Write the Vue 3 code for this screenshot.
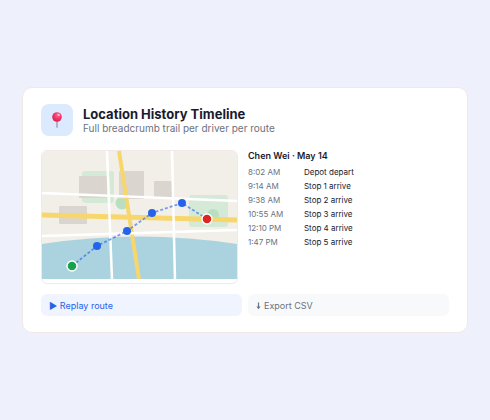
<script setup>
const events = [
  { time: '8:02 AM', label: 'Depot depart' },
  { time: '9:14 AM', label: 'Stop 1 arrive' },
  { time: '9:38 AM', label: 'Stop 2 arrive' },
  { time: '10:55 AM', label: 'Stop 3 arrive' },
  { time: '12:10 PM', label: 'Stop 4 arrive' },
  { time: '1:47 PM', label: 'Stop 5 arrive' },
]

const route = [
  { x: 30, y: 115 },
  { x: 55, y: 95 },
  { x: 85, y: 80 },
  { x: 110, y: 62 },
  { x: 140, y: 52 },
  { x: 165, y: 68 },
]
const routePoints = route.map((p) => `${p.x},${p.y}`).join(' ')
const stops = route.slice(1, -1)
const start = route[0]
const end = route[route.length - 1]
</script>

<template>
  <main class="page">
    <section class="card">
      <header class="head">
        <span class="badge">
          <svg class="pin" viewBox="0 0 12 18" aria-hidden="true">
            <defs>
              <radialGradient id="pin-ball" cx="0.6" cy="0.3" r="0.7">
                <stop offset="0" stop-color="#ff6f91" />
                <stop offset="0.45" stop-color="#f83a6b" />
                <stop offset="1" stop-color="#d81f55" />
              </radialGradient>
            </defs>
            <path d="M5.2 8 H6.8 V16 L6 17.4 L5.2 16 Z" fill="#a8a2b8" />
            <circle cx="6" cy="6" r="4.8" fill="url(#pin-ball)" />
            <ellipse cx="7.6" cy="3.8" rx="1.3" ry="0.9" fill="#ffc2d0" transform="rotate(35 7.6 3.8)" />
          </svg>
        </span>
        <div>
          <h1 class="title">Location History Timeline</h1>
          <p class="subtitle">Full breadcrumb trail per driver per route</p>
        </div>
      </header>

      <div class="body">
        <div class="map">
          <svg viewBox="0 0 195 128" role="img" aria-label="Route map">
            <rect width="195" height="128" fill="#f2efe9" />
            <g fill="#d4ead7">
              <rect x="40" y="20" width="32" height="32" rx="3" />
              <rect x="147" y="44" width="39" height="32" rx="3" />
            </g>
            <g fill="#b8dfc0">
              <circle cx="80" cy="52" r="6.5" />
              <circle cx="171" cy="64" r="6" />
            </g>
            <path d="M0 93 Q97.5 78 195 93 V128 H0 Z" fill="#aad3df" />
            <g fill="#dad5cf">
              <rect x="37" y="25" width="28" height="22" rx="1" />
              <rect x="77" y="20" width="25" height="28" rx="1" />
              <rect x="17" y="55" width="28" height="18" rx="1" />
              <rect x="112" y="30" width="19" height="17" rx="1" />
            </g>
            <g fill="none" stroke="#f7d76b">
              <path d="M0 64 L195 69" stroke-width="5" />
              <path d="M77 0 L97 128" stroke-width="4" />
            </g>
            <g fill="none" stroke="#fff" stroke-width="2.5">
              <path d="M0 42 L195 50" />
              <path d="M0 85 L195 79" />
              <path d="M65 0 L70 128" />
              <path d="M130 0 L133 128" />
            </g>
            <polyline :points="routePoints" class="trail" />
            <circle v-for="s in stops" :key="s.x" :cx="s.x" :cy="s.y" r="4" fill="#2563eb" />
            <g stroke="#fff" stroke-width="1.5">
              <circle :cx="start.x" :cy="start.y" r="5" fill="#16a34a" />
              <circle :cx="end.x" :cy="end.y" r="5" fill="#dc2626" />
            </g>
          </svg>
        </div>

        <div>
          <h2 class="driver">Chen Wei · May 14</h2>
          <table class="log">
            <tbody>
              <tr v-for="e in events" :key="e.time">
                <th scope="row">{{ e.time }}</th>
                <td>{{ e.label }}</td>
              </tr>
            </tbody>
          </table>
        </div>
      </div>

      <div class="actions">
        <button type="button" class="btn primary">▶ Replay route</button>
        <button type="button" class="btn">
          <svg class="down" viewBox="0 0 5 8" aria-hidden="true">
            <path d="M1.9 0.6 H3.1 V4.6 H4.6 L2.5 7.2 L0.4 4.6 H1.9 Z" fill="currentColor" />
          </svg>
          Export CSV
        </button>
      </div>
    </section>
  </main>
</template>

<style>
body {
  background: #eef0fc;
}
</style>

<style scoped>
.page {
  box-sizing: border-box;
  min-height: 100vh;
  padding: 0 22px;
  display: flex;
  align-items: center;
  font-family: Inter, "Liberation Sans", sans-serif;
  color: #1a1a2e;
}

.card {
  box-sizing: border-box;
  flex: 1;
  min-width: 0;
  padding: 16px 18px;
  background: #fff;
  border: 1px solid #f3e8e8;
  border-radius: 10px;
}

.head {
  display: flex;
  align-items: center;
  gap: 10px;
  margin-bottom: 14px;
}

.badge {
  display: flex;
  align-items: center;
  justify-content: center;
  width: 32px;
  height: 32px;
  border-radius: 8px;
  background: #dbeafe;
}

.pin {
  width: 12px;
  height: 18px;
}

.title {
  margin: 0;
  font-size: 13px;
  line-height: 16px;
  font-weight: 700;
}

.subtitle {
  margin: 0;
  font-size: 10px;
  line-height: 12px;
  color: #6b7280;
}

.body {
  display: grid;
  grid-template-columns: 49fr 50fr;
  gap: 10px;
}

.map {
  padding-bottom: 4px;
  border: 1px solid #f3e8e8;
  border-radius: 6px;
  overflow: hidden;
}

.map svg {
  display: block;
  width: 100%;
}

.trail {
  fill: none;
  stroke: #2563eb;
  stroke-width: 1.8;
  stroke-dasharray: 3 2;
  opacity: 0.6;
}

.driver {
  margin: 0 0 3px;
  font-size: 9px;
  line-height: 12px;
  font-weight: 600;
}

.log {
  border-collapse: collapse;
  font-size: 8px;
  line-height: 14px;
}

.log th {
  width: 56px;
  padding: 0;
  text-align: left;
  font-weight: 400;
  color: #6b7280;
}

.log td {
  padding: 0;
}

.actions {
  display: grid;
  grid-template-columns: 1fr 1fr;
  gap: 6px;
  margin-top: 10px;
}

.btn {
  display: flex;
  align-items: center;
  gap: 3px;
  padding: 6px 8px 4px;
  border: 0;
  border-radius: 6px;
  background: #f8f9fb;
  font: 400 9px/12px Inter, "Liberation Sans", sans-serif;
  text-align: left;
  color: #6b7280;
}

.primary {
  background: #eff4ff;
  color: #2563eb;
}

.down {
  width: 5px;
  height: 8px;
}
</style>
